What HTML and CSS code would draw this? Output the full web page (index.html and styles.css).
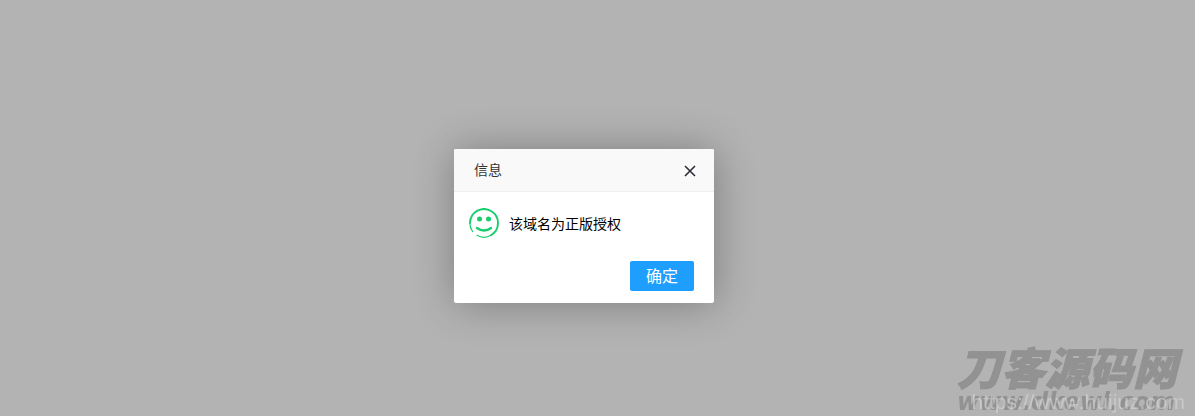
FILE: index.html
```
<!DOCTYPE html>
<html lang="zh-CN">
<head>
<meta charset="UTF-8">
<meta name="viewport" content="width=device-width, initial-scale=1">
<title>信息</title>
<link rel="stylesheet" href="styles.css">
</head>
<body>

<main class="shade">
<section class="dialog" role="dialog" aria-labelledby="dialogTitle">
<header class="dialog-title">
<h1 id="dialogTitle">信息</h1>
<button class="dialog-close" type="button" aria-label="关闭">
<svg width="14" height="14" viewBox="0 0 14 14"><path d="M2 2l10 10M12 2L2 12" fill="none" stroke="#2e2d3c" stroke-width="1.6"/></svg>
</button>
</header>
<div class="dialog-content">
<svg class="smile" width="30" height="30" viewBox="0 0 30 30" fill="none" stroke="#16cf6c" stroke-linecap="round">
<path d="M3.6 23.5A14.2 14.2 0 0 1 .8 15" stroke-width="1.2"/>
<path d="M1 15A14 14 0 1 1 22 27.2" stroke-width="1.9"/>
<path d="M22 27.2A14 14 0 0 1 8 27.3" stroke-width="1.2"/>
<path d="M8 20Q15 25 22 20" stroke-width="2.4"/>
<circle cx="10.5" cy="11" r="2.5" fill="#16cf6c" stroke="none"/>
<circle cx="19.5" cy="11" r="2.5" fill="#16cf6c" stroke="none"/>
</svg>
<p>该域名为正版授权</p>
</div>
<footer class="dialog-btn">
<button class="btn-ok" type="button">确定</button>
</footer>
</section>
</main>

<div class="watermark">
<div class="mark-name">刀客源码网</div>
<div class="mark-site">www.dkewl.com</div>
<div class="mark-url">https://www.huijuz.com</div>
</div>

</body>
</html>
```

FILE: styles.css
```
* {
  box-sizing: border-box;
}
body {
  margin: 0;
  background: #b3b3b3;
  color: #000;
  font-family: "Liberation Sans", "Noto Sans CJK SC", sans-serif;
  font-size: 14px;
  overflow: hidden;
}
h1, p {
  margin: 0;
  font-size: 14px;
  font-weight: normal;
}
.shade {
  min-height: 100vh;
  display: flex;
  justify-content: center;
  align-items: center;
  padding: 36px 27px 0 0;
}

/* Dialog */
.dialog {
  min-width: 260px;
  background: #fff;
  border-radius: 2px;
  box-shadow: 1px 1px 42px rgba(0,0,0,0.3);
}
.dialog-title {
  display: flex;
  justify-content: space-between;
  align-items: center;
  height: 43px;
  padding: 0 17px 0 20px;
  background: #f9f9f9;
  border-bottom: 1px solid #eee;
  border-radius: 2px 2px 0 0;
}
.dialog-title h1 {
  padding-bottom: 2px;
  color: #333;
}
.dialog-close {
  display: flex;
  padding: 2px 0 0;
  border: none;
  background: none;
  cursor: pointer;
}
.dialog-content {
  display: flex;
  align-items: center;
  gap: 10px;
  padding: 16px 15px 11px;
}
.smile {
  flex: none;
}
.dialog-btn {
  display: flex;
  justify-content: flex-end;
  padding: 12px 20px;
}
.btn-ok {
  height: 30px;
  padding: 2px 16px 0;
  border: none;
  border-radius: 2px;
  background: #1e9fff;
  color: #fff;
  font-family: inherit;
  font-size: 16px;
  line-height: 28px;
  cursor: pointer;
}
.btn-ok:hover {
  opacity: 0.9;
}

/* Watermark in the corner */
.watermark {
  position: fixed;
  right: 10px;
  bottom: 0;
  width: 228px;
  color: #929292;
  font-style: italic;
  pointer-events: none;
}
.mark-name {
  font-size: 44px;
  font-weight: 900;
  line-height: 36px;
  white-space: nowrap;
  -webkit-text-stroke: 1px #929292;
}
.mark-site {
  font-family: "DejaVu Sans", sans-serif;
  font-size: 24px;
  font-weight: bold;
  line-height: 28px;
  white-space: nowrap;
}
.mark-url {
  position: absolute;
  right: 0;
  bottom: 2px;
  color: rgba(215,215,215,0.6);
  font-size: 21px;
  font-style: normal;
  line-height: 24px;
}
```
